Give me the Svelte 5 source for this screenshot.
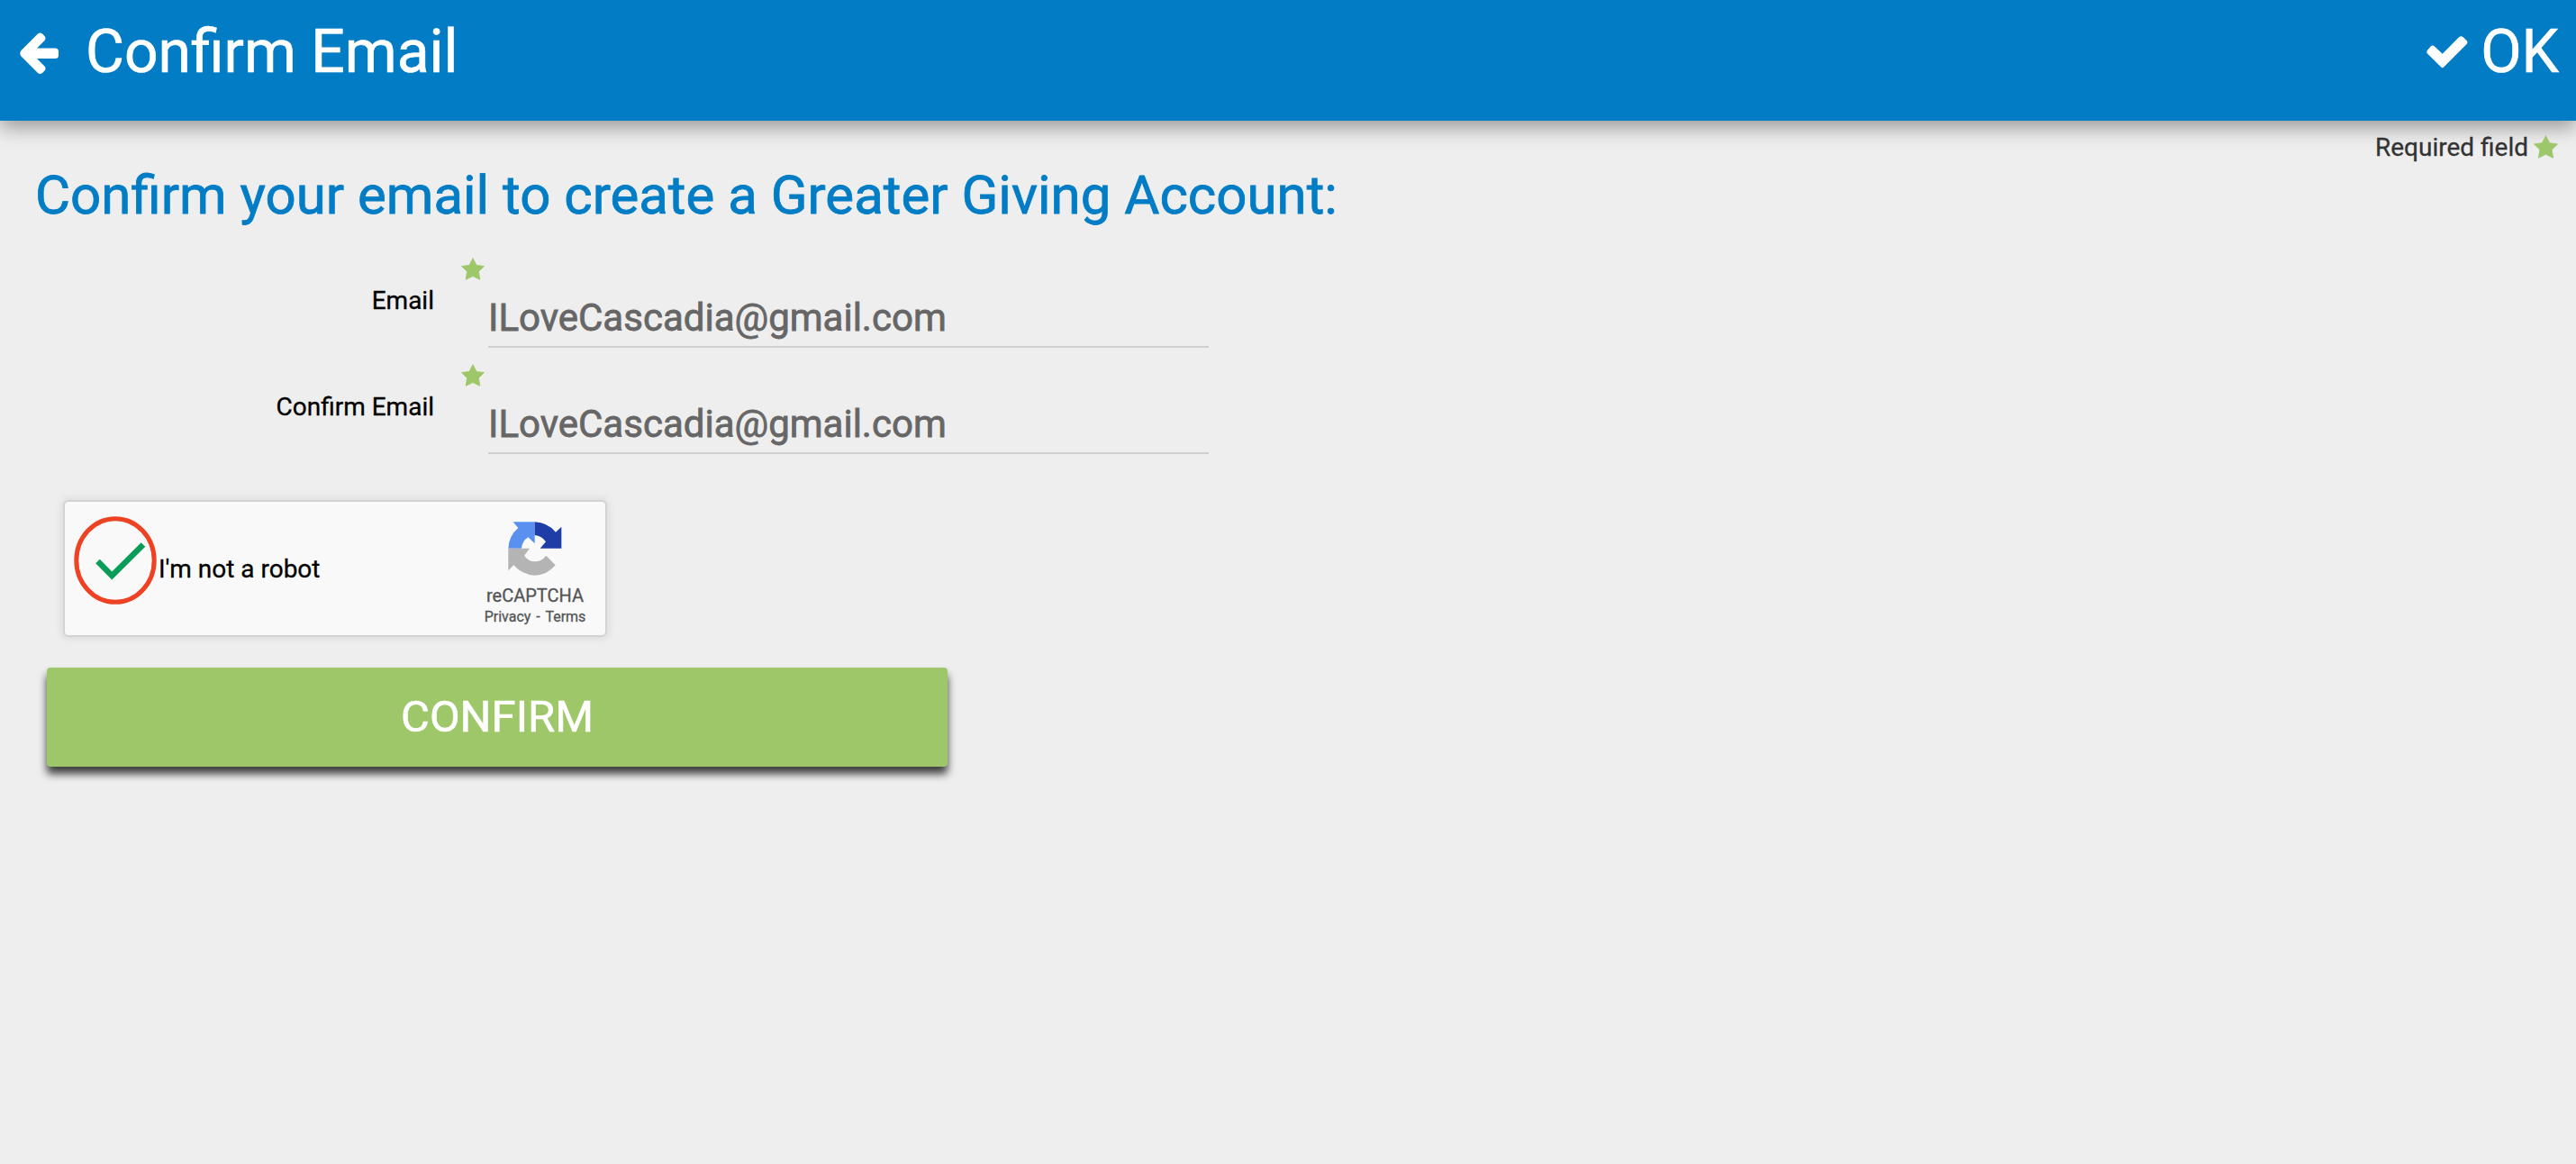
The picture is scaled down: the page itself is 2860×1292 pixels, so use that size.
<script>
  let email = $state("ILoveCascadia@gmail.com");
  let confirmEmail = $state("ILoveCascadia@gmail.com");
</script>

{#snippet star()}
  <svg class="star" viewBox="0 0 26 25" aria-hidden="true">
    <path d="M13 0.7L17 8.4L25.500 9.500L19.400 15.600L20.800 24.300L13 20.500L5.200 24.300L6.600 15.600L0.500 9.500L9 8.400Z" />
  </svg>
{/snippet}

<div class="page">
  <header class="topbar">
    <button class="nav-btn">
      <svg class="arrow" viewBox="0 0 44 46" aria-hidden="true">
        <path d="M1.500 20L20 1.500Q22.500 -0.500 25 1.500L27.500 4Q29.500 6.500 27.500 9L19 17.500H39Q43 17.500 43 21V25.500Q43 29 39 29H19L27.500 37.500Q29.500 40 27.500 42.500L25 45Q22.500 47 20 45L1.500 26.500Q-1 23.300 1.500 20Z" />
      </svg>
      <span>Confirm Email</span>
    </button>
    <button class="nav-btn ok">
      <svg class="tick" viewBox="0 0 46 36" aria-hidden="true">
        <path d="M1 15.800Q-0.500 17.700 1 19.500L16 34.300Q17.700 36 19.400 34.300L44.600 9Q46.300 7 44.600 5L40.500 1Q38.300 -0.700 36.300 1L17.700 19.800L9 11.500Q6.700 9.500 4.700 11.500Z" />
      </svg>
      <span>OK</span>
    </button>
  </header>

  <div class="required">
    <span>Required field</span>
    {@render star()}
  </div>

  <h1>Confirm your email to create a Greater Giving Account:</h1>

  <form class="form">
    <div class="field">
      <label for="email">Email</label>
      {@render star()}
      <input id="email" type="text" bind:value={email} />
    </div>
    <div class="field">
      <label for="confirm">Confirm Email</label>
      {@render star()}
      <input id="confirm" type="text" bind:value={confirmEmail} />
    </div>

    <div class="captcha">
      <svg class="checked" viewBox="0 0 92 98" aria-hidden="true">
        <ellipse cx="46" cy="49" rx="43.200" ry="46.300" fill="none" stroke="#ef4123" stroke-width="5" />
        <path d="M26.500 50L42.300 66L77 31.500" fill="none" stroke="#0a9d58" stroke-width="6.500" />
      </svg>
      <span class="robot">I'm not a robot</span>
      <div class="brand">
        <svg class="logo" viewBox="193 121 180 180" aria-hidden="true">
          <path fill="#5a91f0" d="M210 122H282V194L260 173Q240 186 238 210H194Q196 168 227 142Z" />
          <path fill="#1f3da6" d="M282 122Q325 124 352 156L371 138V210H300L319 188Q306 168 282 166Z" />
          <path fill="#b4b4b4" d="M194 210H265L247 234Q262 254 282 254Q305 254 320 234L351 266Q322 300 282 300Q240 298 212 266L194 284Z" />
        </svg>
        <span class="brand-name">reCAPTCHA</span>
        <span class="brand-links">Privacy <i>-</i> Terms</span>
      </div>
    </div>

    <button type="button" class="confirm">CONFIRM</button>
  </form>
</div>

<style>
  :global(body) {
    background: #eee;
  }
  .page {
    height: 1292px;
    overflow: hidden;
    background: #eee;
    font-family: Roboto, "Liberation Sans", sans-serif;
    color: #000;
    -webkit-text-stroke: 0.3px currentColor;
  }
  button {
    font-family: inherit;
    border: none;
    padding: 0;
    cursor: pointer;
  }

  /* top bar */
  .topbar {
    display: flex;
    justify-content: space-between;
    height: 134px;
    box-sizing: border-box;
    padding: 18px 19px 0 22px;
    background: #027dc5;
    box-shadow: 0 8px 20px rgba(0, 0, 0, 0.35);
  }
  .nav-btn {
    display: flex;
    align-items: center;
    height: 80px;
    background: none;
    color: #fff;
    font-size: 66px;
    line-height: 80px;
    -webkit-text-stroke: 0.6px #fff;
  }
  .nav-btn svg {
    fill: #fff;
    stroke: none;
  }
  .arrow {
    width: 44px;
    height: 46px;
    margin: 2px 29px 0 0;
  }
  .tick {
    width: 46px;
    height: 36px;
    margin: 0 14px 0 0;
  }

  .star {
    width: 26px;
    height: 25px;
    fill: #9dc768;
    stroke: #9dc768;
    stroke-width: 0.8px;
    stroke-linejoin: round;
  }
  .required {
    display: flex;
    justify-content: flex-end;
    align-items: center;
    gap: 6px;
    height: 32px;
    padding: 14px 20px 0 0;
    font-size: 28px;
    line-height: 32px;
    color: #333;
  }
  .required .star {
    width: 27px;
    height: 26px;
    margin-bottom: 2px;
  }

  h1 {
    margin: 0 0 0 39px;
    padding-top: 1px;
    font-size: 60px;
    font-weight: 400;
    line-height: 72px;
    color: #027dc5;
    -webkit-text-stroke: 0.8px #027dc5;
  }

  /* form */
  .form {
    padding-top: 32px;
  }
  .field {
    display: grid;
    grid-template-columns: 482px 26px 800px;
    height: 118px;
  }
  .field label {
    padding-top: 33px;
    text-align: right;
    font-size: 28px;
    line-height: 32px;
  }
  .field .star {
    margin: 1px 0 0 30px;
  }
  .field input {
    box-sizing: border-box;
    width: 800px;
    height: 68px;
    margin: 33px 0 0 34px;
    padding: 2px 0 0;
    border: none;
    border-bottom: 2px solid #d0d0d0;
    background: none;
    outline: none;
    font-family: inherit;
    font-size: 42px;
    color: #666;
    -webkit-text-stroke: 0.8px #666;
  }

  .captcha {
    display: flex;
    box-sizing: border-box;
    width: 604px;
    height: 152px;
    margin: 34px 0 0 70px;
    padding: 16px 0 0 10px;
    border: 2px solid #d3d3d3;
    border-radius: 6px;
    background: #f9f9f9;
    box-shadow: 0 0 8px 2px rgba(0, 0, 0, 0.08);
  }
  .checked {
    width: 92px;
    height: 98px;
  }
  .robot {
    margin: 43px 0 0 2px;
    font-size: 28px;
    line-height: 32px;
  }
  .brand {
    display: flex;
    flex-direction: column;
    align-items: center;
    width: 120px;
    margin: 6px 18px 0 auto;
    color: #555;
  }
  .logo {
    width: 60px;
    height: 60px;
  }
  .brand-name {
    margin-top: 10px;
    font-size: 20px;
    line-height: 24px;
  }
  .brand-links {
    margin-top: 2px;
    font-size: 16px;
    line-height: 20px;
  }
  .brand-links i {
    font-style: normal;
    margin: 0 2px;
  }

  .confirm {
    display: block;
    width: 1000px;
    height: 110px;
    margin: 34px 0 0 52px;
    padding-bottom: 1px;
    border-radius: 4px;
    background: #9dc768;
    box-shadow: 0 8px 10px rgba(0, 0, 0, 0.75);
    color: #fff;
    font-size: 49px;
    -webkit-text-stroke: 0.6px #fff;
  }
</style>
